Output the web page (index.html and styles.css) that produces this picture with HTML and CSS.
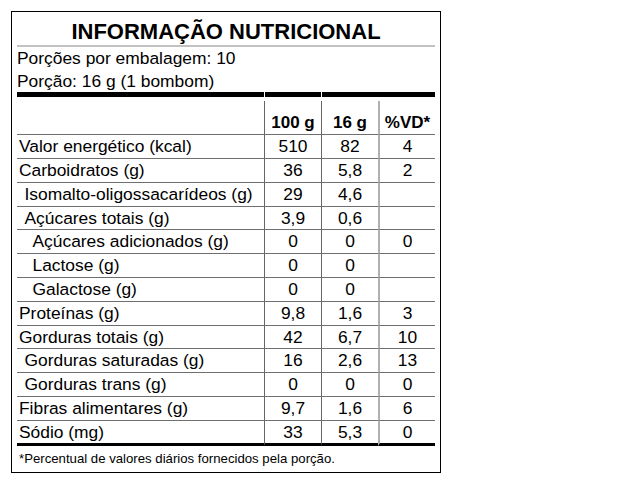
FILE: index.html
```html
<!DOCTYPE html>
<html lang="pt-BR">
<head>
<meta charset="utf-8">
<title>Informação Nutricional</title>
<link rel="stylesheet" href="styles.css">
</head>
<body>
<div class="label">
  <h1 class="title">INFORMAÇÃO NUTRICIONAL</h1>
  <div class="serving">
    <p>Porções por embalagem: 10</p>
    <p>Porção: 16 g (1 bombom)</p>
  </div>
  <div class="facts">
    <div class="bar"></div><div class="bar sep"></div><div class="bar sep"></div><div class="bar"></div>

    <div class="hd"></div><div class="hd n v1">100 g</div><div class="hd n v1">16 g</div><div class="hd n v2">%VD*</div>

    <div class="c">Valor energético (kcal)</div><div class="c n v1">510</div><div class="c n v1">82</div><div class="c n v2">4</div>
    <div class="c">Carboidratos (g)</div><div class="c n v1">36</div><div class="c n v1">5,8</div><div class="c n v2">2</div>
    <div class="c i1">Isomalto-oligossacarídeos (g)</div><div class="c n v1">29</div><div class="c n v1">4,6</div><div class="c n v2"></div>
    <div class="c i1">Açúcares totais (g)</div><div class="c n v1">3,9</div><div class="c n v1">0,6</div><div class="c n v2"></div>
    <div class="c i2">Açúcares adicionados (g)</div><div class="c n v1">0</div><div class="c n v1">0</div><div class="c n v2">0</div>
    <div class="c i2">Lactose (g)</div><div class="c n v1">0</div><div class="c n v1">0</div><div class="c n v2"></div>
    <div class="c i2">Galactose (g)</div><div class="c n v1">0</div><div class="c n v1">0</div><div class="c n v2"></div>
    <div class="c">Proteínas (g)</div><div class="c n v1">9,8</div><div class="c n v1">1,6</div><div class="c n v2">3</div>
    <div class="c">Gorduras totais (g)</div><div class="c n v1">42</div><div class="c n v1">6,7</div><div class="c n v2">10</div>
    <div class="c i1">Gorduras saturadas (g)</div><div class="c n v1">16</div><div class="c n v1">2,6</div><div class="c n v2">13</div>
    <div class="c i1">Gorduras trans (g)</div><div class="c n v1">0</div><div class="c n v1">0</div><div class="c n v2">0</div>
    <div class="c">Fibras alimentares (g)</div><div class="c n v1">9,7</div><div class="c n v1">1,6</div><div class="c n v2">6</div>
    <div class="c last">Sódio (mg)</div><div class="c n v1 last">33</div><div class="c n v1 last">5,3</div><div class="c n v2 last">0</div>
  </div>
  <p class="note">*Percentual de valores diários fornecidos pela porção.</p>
</div>
</body>
</html>
```

FILE: styles.css
```css
html, body {
  margin: 0;
  background: #fff;
}

body {
  padding: 11px 0 0 11px;
  font-family: "Liberation Sans", Arial, sans-serif;
  color: #000;
}

.label {
  width: 418px;
  border: 1px solid #000;
  padding: 0 5px 4.6px;
}

.title {
  margin: 0;
  padding-top: 7.4px;
  font-size: 22px;
  line-height: 26px;
  font-weight: bold;
  text-align: center;
  border-bottom: 2px solid #c2c2c2;
}

.serving p {
  margin: 0;
  font-size: 17.4px;
  line-height: 22.5px;
}

.facts {
  display: grid;
  grid-template-columns: 247px 57px 57px 57px;
  font-size: 17.4px;
}

.bar {
  height: 5px;
  background: #000;
}

.bar.sep {
  border-left: 1px solid #fff;
}

.hd {
  margin-top: 4px;
  padding: 12px 0 1px;
  line-height: 20px;
  font-size: 17px;
  font-weight: bold;
  border-bottom: 1px solid #6f6f6f;
}

.c {
  line-height: 22.77px;
  padding-left: 2px;
  white-space: nowrap;
  border-bottom: 1px solid #6f6f6f;
}

.c.i1 {
  padding-left: 7.5px;
}

.c.i2 {
  padding-left: 15.5px;
}

.n {
  padding-left: 0;
  text-align: center;
}

.v1 {
  border-left: 1px solid #666;
}

.v2 {
  border-left: 2px solid #b0b0b0;
}

.c.last {
  border-bottom: 3px solid #000;
}

.note {
  margin: 5px 0 0;
  padding-left: 2px;
  font-size: 13.2px;
  line-height: 16px;
}
```
